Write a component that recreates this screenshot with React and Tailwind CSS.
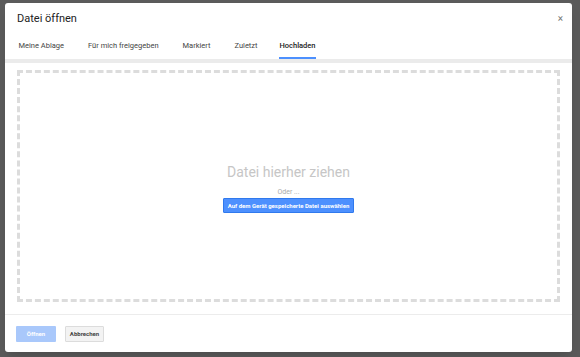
const tabs = ['Meine Ablage', 'Für mich freigegeben', 'Markiert', 'Zuletzt', 'Hochladen'];

export default function App() {
  return (
    <div className="w-[580px] h-[357px] bg-[#5b5b5b] pl-[5px] pr-[8px] pt-[3px] pb-[5px] font-['Roboto',sans-serif]">
      <div className="w-full h-full bg-white rounded-[3px] flex flex-col shadow-lg">
        <div className="flex items-center justify-between pl-[12px] pr-[9px] h-[32px]">
          <h1 className="text-[11px] text-[#222]">Datei öffnen</h1>
          <span className="text-[10px] text-[#777] leading-none">×</span>
        </div>
        <div className="flex items-end pl-[13px] h-[24px]">
          {tabs.map((t, i) => (
            <div
              key={t}
              className={
                'h-full flex flex-col justify-between mr-[23px] ' +
                (i === 4 ? 'font-medium text-[#222] -ml-[2px]' : 'text-[#444]')
              }
            >
              <span className="text-[7.5px] pt-[5px] px-[0.5px]">{t}</span>
              <div className={'h-[2px] ' + (i === 4 ? 'bg-[#4d90fe]' : 'bg-transparent')} />
            </div>
          ))}
        </div>
        <div className="h-[4px] bg-[#ebebeb]" />
        <div className="flex-1 px-[12px] pt-[7px] pb-[12px] border-b border-[#ececec]">
          <div className="h-full border-[3px] border-dashed border-[#dcdcdc] flex flex-col items-center justify-center pt-[4px]">
            <div className="text-[14px] text-[#c6c6c6] leading-[18px]">Datei hierher ziehen</div>
            <div className="text-[7px] text-[#aaa] mt-[6px]">Oder ...</div>
            <button className="mt-0 h-[15px] px-[4px] bg-[#4d90fe] border border-[#3079ed] text-white text-[6px] font-bold rounded-[1px]">
              Auf dem Gerät gespeicherte Datei auswählen
            </button>
          </div>
        </div>
        <div className="h-[37px] flex items-center gap-[9px] pl-[11px]">
          <button className="h-[16px] w-[40px] bg-[#a9c8fb] text-white text-[6px] font-bold rounded-[1px]">
            Öffnen
          </button>
          <button className="h-[16px] w-[39px] bg-[#f3f3f3] border border-[#dcdcdc] text-[#444] text-[6px] font-bold rounded-[1px]">
            Abbrechen
          </button>
        </div>
      </div>
    </div>
  );
}
